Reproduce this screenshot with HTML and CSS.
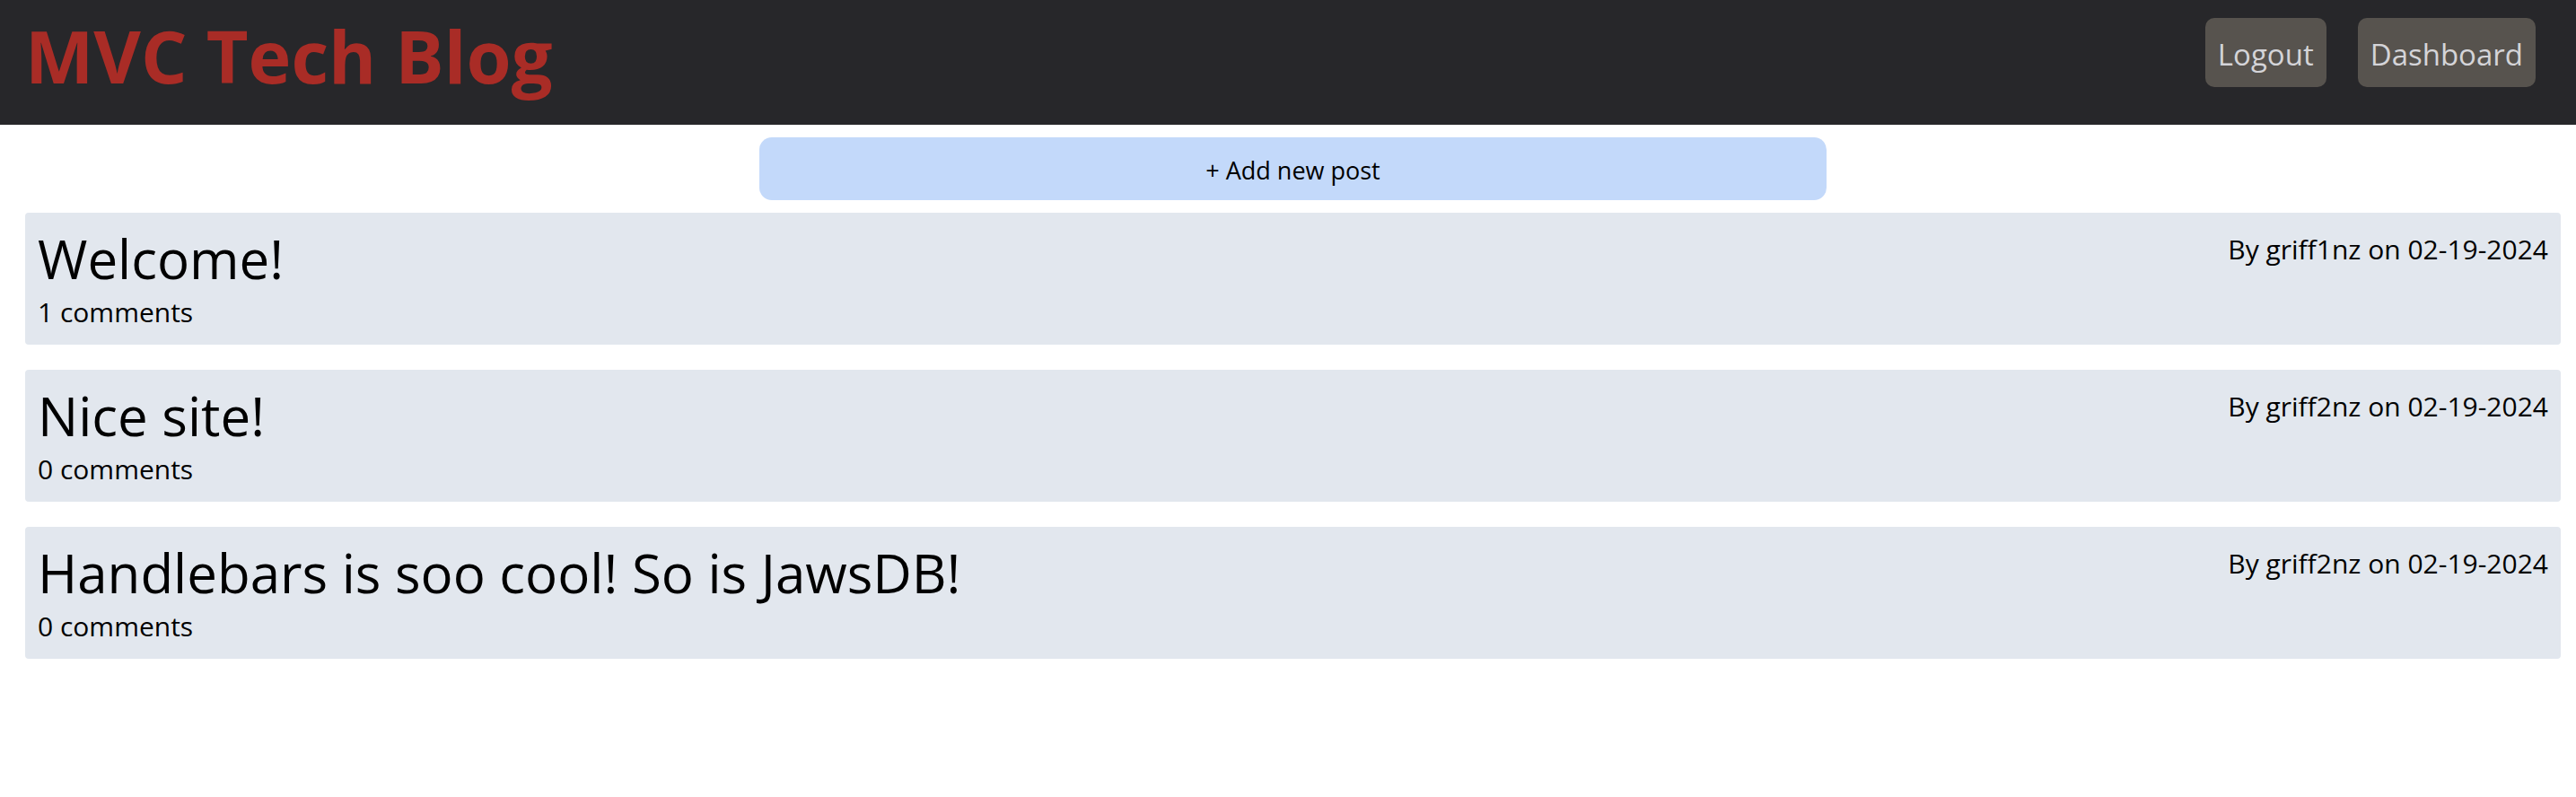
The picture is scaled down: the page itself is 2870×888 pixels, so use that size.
FILE: index.html
```html
<!DOCTYPE html>
<html lang="en">
<head>
<meta charset="utf-8">
<meta name="viewport" content="width=device-width, initial-scale=1">
<title>MVC Tech Blog</title>
<link rel="stylesheet" href="styles.css">
</head>
<body>
<header class="site-header">
  <h1 class="site-title">MVC Tech Blog</h1>
  <nav class="site-nav">
    <button class="nav-button" type="button">Logout</button>
    <a class="nav-button" href="#dashboard">Dashboard</a>
  </nav>
</header>
<main class="content">
  <button class="add-post" type="button">+ Add new post</button>
  <article class="post">
    <div class="post-main">
      <h2 class="post-title">Welcome!</h2>
      <p class="post-text">1 comments</p>
    </div>
    <p class="post-text">By griff1nz on 02-19-2024</p>
  </article>
  <article class="post">
    <div class="post-main">
      <h2 class="post-title">Nice site!</h2>
      <p class="post-text">0 comments</p>
    </div>
    <p class="post-text">By griff2nz on 02-19-2024</p>
  </article>
  <article class="post">
    <div class="post-main">
      <h2 class="post-title">Handlebars is soo cool! So is JawsDB!</h2>
      <p class="post-text">0 comments</p>
    </div>
    <p class="post-text">By griff2nz on 02-19-2024</p>
  </article>
</main>
</body>
</html>
```

FILE: styles.css
```css
* {
  box-sizing: border-box;
}

body {
  margin: 0;
  background: #fff;
  color: #000;
  font-family: "Segoe UI", "Open Sans", "Noto Sans", sans-serif;
}

h1,
h2,
p {
  margin: 0;
  font-weight: 400;
}

.site-header {
  display: flex;
  justify-content: space-between;
  align-items: flex-start;
  padding: 20px 45px 35px 28px;
  background: #27272a;
}

.site-title {
  color: #a92c26;
  font-size: 81px;
  line-height: 84px;
  font-weight: 700;
}

.site-nav {
  display: flex;
  gap: 35px;
}

.nav-button {
  padding: 16px 14px 12px;
  border: 0;
  border-radius: 10px;
  background: #57534e;
  color: #d4d4d8;
  font-family: inherit;
  font-size: 33px;
  line-height: 49px;
  text-decoration: none;
}

.content {
  padding: 14px 17px 28px 28px;
}

.add-post {
  display: block;
  width: calc((100% + 28px) * 5 / 12);
  margin: 0 auto 14px;
  padding: 16px 14px 12px;
  border: 0;
  border-radius: 14px;
  background: #c3d9fa;
  color: #000;
  font-family: inherit;
  font-size: 27px;
  line-height: 42px;
}

.post {
  display: flex;
  justify-content: space-between;
  gap: 28px;
  margin-bottom: 28px;
  padding: 16px 14px 12px;
  border-radius: 4px;
  background: #e2e7ee;
}

.post-title {
  font-size: 60px;
  line-height: 70px;
}

.post-text {
  font-size: 30px;
  line-height: 49px;
}
```
